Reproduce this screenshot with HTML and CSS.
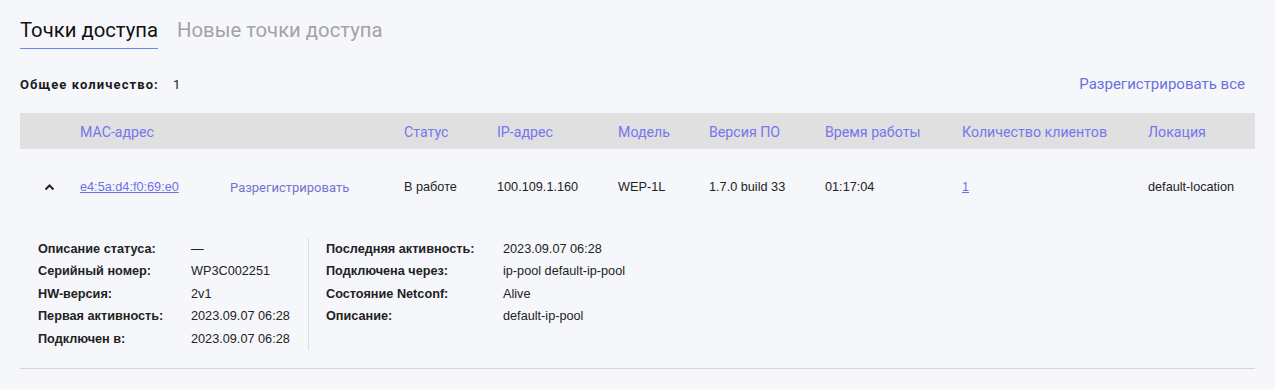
FILE: index.html
```html
<!DOCTYPE html>
<html lang="ru">
<head>
    <meta charset="UTF-8">
    <meta name="viewport" content="width=device-width, initial-scale=1.0">
    <title>Точки доступа</title>
    <link rel="stylesheet" href="styles.css">
</head>
<body>
    <div class="page">
        <div class="tabs">
            <div class="tab active">Точки доступа</div>
            <div class="tab">Новые точки доступа</div>
        </div>

        <div class="summary">
            <div class="total"><b>Общее количество:</b><span>1</span></div>
            <a class="unregister-all" href="#">Разрегистрировать все</a>
        </div>

        <div class="grid head">
            <div></div>
            <div>MAC-адрес</div>
            <div></div>
            <div>Статус</div>
            <div>IP-адрес</div>
            <div>Модель</div>
            <div>Версия ПО</div>
            <div>Время работы</div>
            <div>Количество клиентов</div>
            <div>Локация</div>
        </div>

        <div class="grid row">
            <div class="toggle">
                <svg width="11" height="8" viewBox="0 0 11 8">
                    <polyline points="1.5,6.5 5.5,2.5 9.5,6.5" fill="none" stroke="#222" stroke-width="2"/>
                </svg>
            </div>
            <div><a class="link" href="#">e4:5a:d4:f0:69:e0</a></div>
            <div><a class="action" href="#">Разрегистрировать</a></div>
            <div>В работе</div>
            <div>100.109.1.160</div>
            <div>WEP-1L</div>
            <div>1.7.0 build 33</div>
            <div>01:17:04</div>
            <div><a class="link" href="#">1</a></div>
            <div>default-location</div>
        </div>

        <div class="details">
            <div class="col left">
                <div class="item"><span class="label">Описание статуса:</span><span>—</span></div>
                <div class="item"><span class="label">Серийный номер:</span><span>WP3C002251</span></div>
                <div class="item"><span class="label">HW-версия:</span><span>2v1</span></div>
                <div class="item"><span class="label">Первая активность:</span><span>2023.09.07 06:28</span></div>
                <div class="item"><span class="label">Подключен в:</span><span>2023.09.07 06:28</span></div>
            </div>
            <div class="col right">
                <div class="item"><span class="label">Последняя активность:</span><span>2023.09.07 06:28</span></div>
                <div class="item"><span class="label">Подключена через:</span><span>ip-pool default-ip-pool</span></div>
                <div class="item"><span class="label">Состояние Netconf:</span><span>Alive</span></div>
                <div class="item"><span class="label">Описание:</span><span>default-ip-pool</span></div>
            </div>
        </div>
    </div>
</body>
</html>
```

FILE: styles.css
```css
body {
    margin: 0;
    background-color: #f6f7fb;
    font-family: "Liberation Sans", Arial, sans-serif;
    color: #222;
}
.page {
    padding: 18px 20px 0 20px;
}
.tabs {
    display: flex;
    gap: 19px;
    font-family: Roboto, "Liberation Sans", sans-serif;
    font-size: 20.3px;
    line-height: 24px;
}
.tab {
    padding-bottom: 6px;
    color: #a3a3a3;
}
.tab.active {
    color: #111;
    border-bottom: 1px solid #6f86ee;
}
.summary {
    display: flex;
    justify-content: space-between;
    align-items: center;
    margin-top: 26px;
    height: 18px;
    padding-right: 10px;
}
.total {
    font-family: Roboto, "Liberation Sans", sans-serif;
    font-size: 13px;
    color: #1a1a24;
}
.total b {
    font-weight: 700;
    letter-spacing: 1.1px;
    margin-right: 14px;
}
.unregister-all {
    font-family: Roboto, "Liberation Sans", sans-serif;
    font-size: 15px;
    color: #6b70dc;
    text-decoration: none;
}
.grid {
    display: grid;
    grid-template-columns: 60px 150px 174px 93px 121px 91px 116px 137px 186px 1fr;
    align-items: center;
}
.head {
    margin-top: 20px;
    height: 36px;
    padding-top: 1px;
    box-sizing: border-box;
    background-color: #e0e0e0;
    font-family: Roboto, "Liberation Sans", sans-serif;
    font-size: 14.2px;
    color: #7676ee;
}
.row {
    height: 76px;
    font-size: 12.7px;
}
.toggle {
    display: flex;
    justify-content: flex-end;
    padding-right: 25px;
}
.link {
    color: #6c70e6;
    text-decoration: underline;
}
.action {
    font-family: Roboto, "Liberation Sans", sans-serif;
    font-size: 13px;
    color: #7373d0;
    text-decoration: none;
}
.details {
    display: flex;
    padding: 13px 0 18px 18px;
    border-bottom: 1px solid #d6d6d6;
    font-size: 12.7px;
    line-height: 22.4px;
}
.col.left {
    width: 270px;
    border-right: 1px solid #dedede;
}
.col.right {
    padding-left: 17px;
}
.item {
    display: flex;
}
.label {
    font-weight: 700;
    color: #222;
}
.left .label {
    width: 153px;
}
.right .label {
    width: 177px;
}
```
